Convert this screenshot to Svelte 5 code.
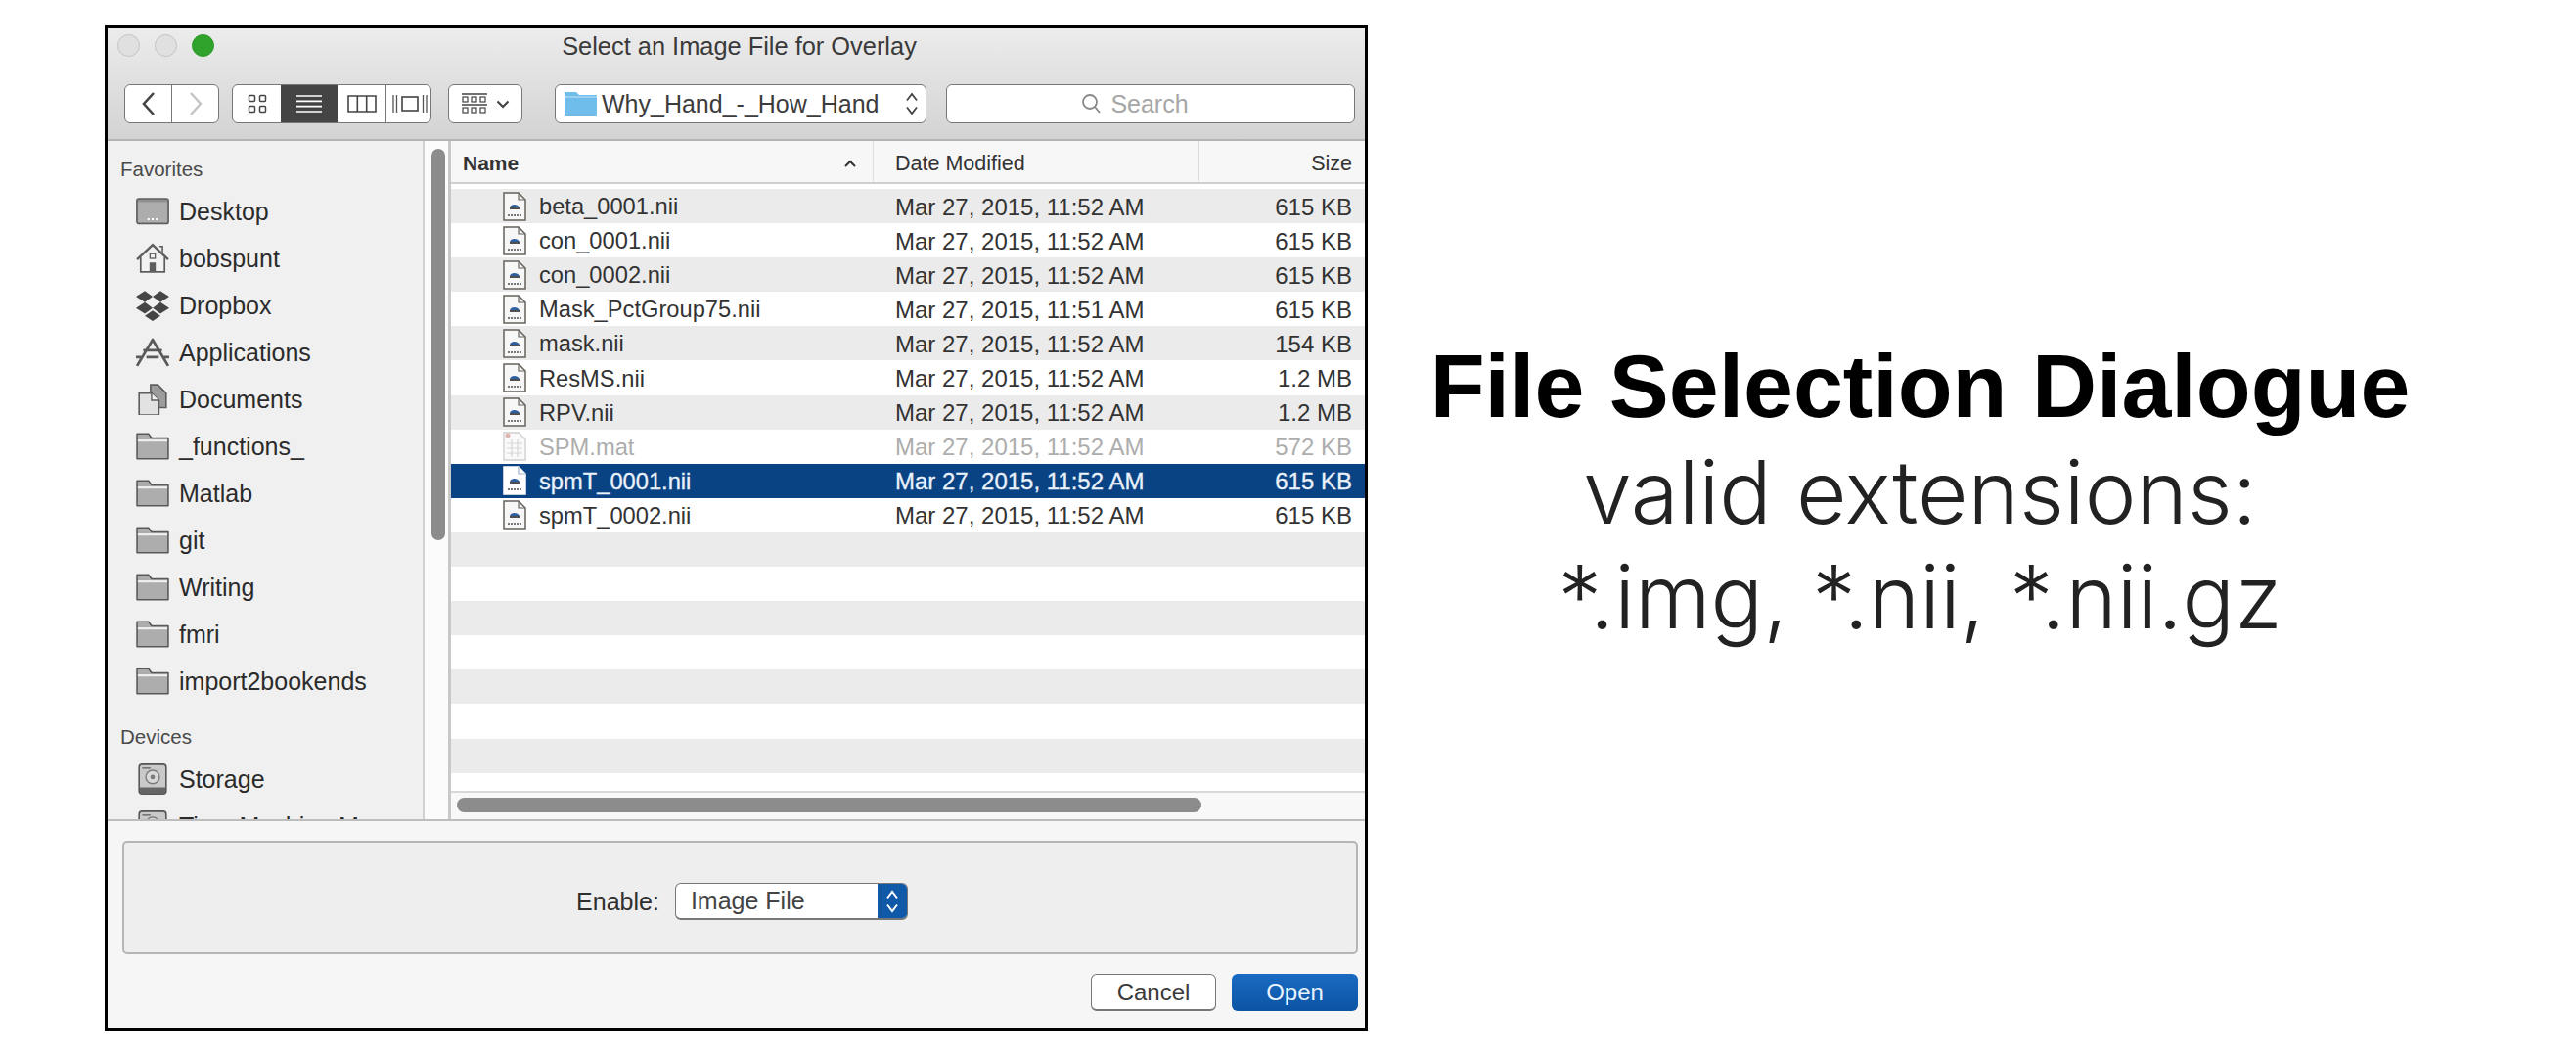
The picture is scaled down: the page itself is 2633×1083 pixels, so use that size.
<script>
  const favorites = [
    ['desktop', 'Desktop'], ['home', 'bobspunt'], ['dropbox', 'Dropbox'], ['apps', 'Applications'],
    ['docs', 'Documents'], ['folder', '_functions_'], ['folder', 'Matlab'], ['folder', 'git'],
    ['folder', 'Writing'], ['folder', 'fmri'], ['folder', 'import2bookends']
  ];
  const files = [
    ['beta_0001.nii', 'Mar 27, 2015, 11:52 AM', '615 KB'],
    ['con_0001.nii', 'Mar 27, 2015, 11:52 AM', '615 KB'],
    ['con_0002.nii', 'Mar 27, 2015, 11:52 AM', '615 KB'],
    ['Mask_PctGroup75.nii', 'Mar 27, 2015, 11:51 AM', '615 KB'],
    ['mask.nii', 'Mar 27, 2015, 11:52 AM', '154 KB'],
    ['ResMS.nii', 'Mar 27, 2015, 11:52 AM', '1.2 MB'],
    ['RPV.nii', 'Mar 27, 2015, 11:52 AM', '1.2 MB'],
    ['SPM.mat', 'Mar 27, 2015, 11:52 AM', '572 KB'],
    ['spmT_0001.nii', 'Mar 27, 2015, 11:52 AM', '615 KB'],
    ['spmT_0002.nii', 'Mar 27, 2015, 11:52 AM', '615 KB']
  ];
  const rows = Array.from({ length: 18 }, (_, i) => files[i] ?? null);
</script>

{#snippet sideIcon(kind)}
  <svg class="side-icon" viewBox="0 0 32 30" aria-hidden="true">
    {#if kind === 'desktop'}
      <rect x="0.8" y="2.8" width="30.4" height="24" rx="2" fill="#8f8f8f" stroke="#5d5d5d" stroke-width="1.4"/>
      <rect x="2" y="6" width="28" height="19.5" fill="#adadad"/>
      <path d="M11 22.5h2M15 22.5h2M19 22.5h2" stroke="#fff" stroke-width="2"/>
    {:else if kind === 'home'}
      <path d="M4.5 14v14h23V14" fill="#f2f2f2" stroke="#5d5d5d" stroke-width="1.6"/>
      <path d="M1 16 16 2l15 14" fill="none" stroke="#5d5d5d" stroke-width="2.2"/>
      <path d="M22.5 3.5h3v6" fill="none" stroke="#5d5d5d" stroke-width="1.5"/>
      <rect x="13" y="19" width="6" height="9" fill="#5d5d5d"/>
      <rect x="13.5" y="10.5" width="5" height="4.5" fill="none" stroke="#5d5d5d" stroke-width="1.2"/>
    {:else if kind === 'dropbox'}
      <path d="M8.5 1 0 6.500 8.500 12 16 6.500zM23.500 1 16 6.500 23.500 12 32 6.500zM8.500 12 0 17.500 8.500 23 16 17.500zM23.500 12 16 17.500 23.500 23 32 17.500zM16 20l-7.500 5L16 30l7.500-5z" fill="#454545"/>
    {:else if kind === 'apps'}
      <path d="M1 28 16.500 2M31 28 15.500 2M0 19.500h5M10 19.500h12M27 19.500h5M7 13h18" fill="none" stroke="#5a5a5a" stroke-width="2.600"/>
    {:else if kind === 'docs'}
      <path d="M14 1h7l8 8v14H14z" fill="#9c9c9c" stroke="#5d5d5d" stroke-width="1.500"/>
      <path d="M3 9h12l7 7v14H3z" fill="#e2e2e2" stroke="#5d5d5d" stroke-width="1.500"/>
      <path d="M15 9v7h7" fill="#f4f4f4" stroke="#5d5d5d" stroke-width="1.300"/>
    {:else if kind === 'folder'}
      <path d="M1 27V3h11l3 4h16v20z" fill="#adadad" stroke="#5a5a5a" stroke-width="1.500" stroke-linejoin="round"/>
      <path d="M1.800 9.500h28.400" stroke="#f0f0f0" stroke-width="2"/>
    {:else if kind === 'disk'}
      <rect x="3" y="0.800" width="26" height="28.400" rx="3" fill="#c9c9c9" stroke="#555" stroke-width="1.500"/>
      <circle cx="16" cy="13" r="6.500" fill="#d9d9d9" stroke="#7c7c7c" stroke-width="1.300"/>
      <circle cx="16" cy="13" r="2.200" fill="#7c7c7c"/>
      <path d="M6 4.500h8" stroke="#666" stroke-width="1.300"/>
      <rect x="3.500" y="23" width="25" height="6" fill="#656565"/>
    {/if}
  </svg>
{/snippet}

{#snippet fileIcon(mat, selected)}
  <svg class="file-icon" viewBox="0 0 26 30" aria-hidden="true">
    {#if mat}
      <path d="M2 1h15l7 7v21H2z" fill="#fafafa" stroke="#d0d0d0" stroke-width="1.400"/>
      <path d="M5 12h16M5 17h16M5 22h16M10 8v18M16 8v18" stroke="#d6d6d6" stroke-width="1.200"/>
      <circle cx="6" cy="4" r="2.500" fill="#e0b5b0"/>
    {:else}
      <path d="M2 1h15l7 7v21H2z" fill={selected ? '#fff' : '#f7f7f7'} stroke={selected ? '#fff' : '#67625c'} stroke-width="1.500"/>
      <path d="M17 1v7h7" fill="none" stroke={selected ? '#9db4d0' : '#67625c'} stroke-width="1.200"/>
      <path d="M8 16c1-4 8-4 10 0z" fill="#2d5fa0"/>
      <path d="M8 17h10" stroke="#3d3d3d" stroke-width="1.800"/>
      <path d="M6 24h14" stroke="#777" stroke-width="2" stroke-dasharray="2 1"/>
    {/if}
  </svg>
{/snippet}

<div class="page">
  <section class="dialog">
    <header class="chrome">
      <div class="titlerow">
        <div class="lights">
          <span class="light"></span><span class="light"></span><span class="light green"></span>
        </div>
        <span class="title">Select an Image File for Overlay</span>
      </div>
      <div class="toolbar">
        <div class="seg nav">
          <span class="cell"><svg viewBox="0 0 16 26" width="16" height="26"><path d="M13 2 3 13l10 11" fill="none" stroke="#444" stroke-width="2.600"/></svg></span>
          <span class="cell"><svg viewBox="0 0 16 26" width="16" height="26"><path d="M3 2l10 11L3 24" fill="none" stroke="#c4c4c4" stroke-width="2.400"/></svg></span>
        </div>
        <div class="seg views">
          <span class="cell c1"><svg viewBox="0 0 20 20" width="20" height="20"><g fill="none" stroke="#444" stroke-width="1.500"><rect x="1.500" y="1.500" width="6" height="6" rx="1"/><rect x="12.500" y="1.500" width="6" height="6" rx="1"/><rect x="1.500" y="12.500" width="6" height="6" rx="1"/><rect x="12.500" y="12.500" width="6" height="6" rx="1"/></g></svg></span>
          <span class="cell c2 active"><svg viewBox="0 0 26 20" width="26" height="20"><path d="M0 2h26M0 7.300h26M0 12.600h26M0 18h26" stroke="#fff" stroke-width="1.700"/></svg></span>
          <span class="cell c1"><svg viewBox="0 0 30 18" width="30" height="18"><path d="M1 1h28v16H1zM10.300 1v16M19.700 1v16" fill="none" stroke="#444" stroke-width="1.600"/></svg></span>
          <span class="cell c1"><svg viewBox="0 0 36 18" width="36" height="18"><path d="M1 0v18M4.500 0v18M31.500 0v18M35 0v18" stroke="#555" stroke-width="1.300"/><rect x="10" y="2" width="16" height="14" fill="none" stroke="#444" stroke-width="1.600"/></svg></span>
        </div>
        <div class="seg arrange">
          <svg viewBox="0 0 26 22" width="26" height="22"><path d="M0 1h26M0 12h26" stroke="#444" stroke-width="1.300"/><g fill="none" stroke="#444" stroke-width="1.200"><rect x="1" y="4" width="5" height="5"/><rect x="10" y="4" width="5" height="5"/><rect x="19" y="4" width="5" height="5"/><rect x="1" y="15" width="5" height="5"/><rect x="10" y="15" width="5" height="5"/><rect x="19" y="15" width="5" height="5"/></g></svg>
          <svg viewBox="0 0 14 9" width="14" height="9"><path d="M1.500 1.500 7 7l5.500-5.500" fill="none" stroke="#444" stroke-width="2.200"/></svg>
        </div>
        <div class="seg path">
          <svg viewBox="0 0 33 25" width="33" height="25"><path d="M0 25V0h12l3 3h18v22z" fill="#6fbdea"/><path d="M0 5h33" stroke="#a9d8f3" stroke-width="1.500"/></svg>
          <span class="pathname">Why_Hand_-_How_Hand</span>
          <svg class="updown" viewBox="0 0 14 28" width="14" height="28"><path d="M2 10.500 7 4l5 6.500M2 17.500 7 24l5-6.500" fill="none" stroke="#444" stroke-width="1.800"/></svg>
        </div>
        <div class="seg search">
          <svg viewBox="0 0 20 22" width="20" height="22"><circle cx="9" cy="9" r="7" fill="none" stroke="#888" stroke-width="1.800"/><path d="m14 14 5 6" stroke="#888" stroke-width="1.800"/></svg>
          <span>Search</span>
        </div>
      </div>
    </header>

    <div class="main">
      <aside class="sidebar">
        <h3>Favorites</h3>
        {#each favorites as item}
          <div class="side-item">{@render sideIcon(item[0])}<span>{item[1]}</span></div>
        {/each}
        <h3 class="devices">Devices</h3>
        <div class="side-item">{@render sideIcon('disk')}<span>Storage</span></div>
        <div class="side-item">{@render sideIcon('disk')}<span>Time Machine M</span></div>
      </aside>
      <div class="vtrack"><div class="vthumb"></div></div>
      <div class="browser">
        <div class="thead">
          <div class="th name"><b>Name</b><svg viewBox="0 0 12 8" width="12" height="8"><path d="M1 7l5-5 5 5" fill="none" stroke="#333" stroke-width="2"/></svg></div>
          <div class="th date">Date Modified</div>
          <div class="th size">Size</div>
        </div>
        <div class="tbody">
          {#each rows as row, i}
            <div class="row" class:stripe={i % 2 === 0} class:selected={i === 8} class:dim={i === 7}>
              {#if row}
                <div class="td name">{@render fileIcon(i === 7, i === 8)}<span>{row[0]}</span></div>
                <div class="td date">{row[1]}</div>
                <div class="td size">{row[2]}</div>
              {/if}
            </div>
          {/each}
        </div>
        <div class="htrack"><div class="hthumb"></div></div>
      </div>
    </div>

    <footer class="footer">
      <div class="accessory">
        <span class="enable">Enable:</span>
        <div class="select">
          <span class="select-text">Image File</span>
          <span class="stepper"><svg viewBox="0 0 14 28" width="14" height="28"><path d="M2 10.500 7 4l5 6.500M2 17.500 7 24l5-6.500" fill="none" stroke="#fff" stroke-width="2"/></svg></span>
        </div>
      </div>
      <div class="actions">
        <span class="btn">Cancel</span>
        <span class="btn primary">Open</span>
      </div>
    </footer>
  </section>

  <section class="caption">
    <strong>File Selection Dialogue</strong>
    <span>valid extensions:</span>
    <span>*.img, *.nii, *.nii.gz</span>
  </section>
</div>

<style>
  :global(body) { margin: 0; background: #fff; }
  .page {
    display: flex; align-items: flex-start; width: 2633px; height: 1083px;
    padding: 26px 0 0 107px; box-sizing: border-box; overflow: hidden;
    font-family: "Liberation Sans", Arial, sans-serif; color: #2b2b2b;
  }
  .dialog {
    width: 1291px; height: 1027px; box-sizing: border-box; border: 3px solid #000;
    display: flex; flex-direction: column; background: #f6f6f6; flex: none;
  }
  .chrome {
    height: 115px; flex: none; box-sizing: border-box;
    background: linear-gradient(#ececec, #d3d3d3); border-bottom: 2px solid #b3b3b3;
  }
  .titlerow { height: 57px; position: relative; display: flex; align-items: center; justify-content: center; padding-bottom: 20px; box-sizing: border-box; }
  .lights { position: absolute; left: 10px; top: 6px; display: flex; gap: 15px; }
  .light { width: 23px; height: 23px; border-radius: 50%; box-sizing: border-box; border: 1.500px solid #c4c4c4; background: #e0e0e0; }
  .light.green { background: #2fa32b; border-color: #2c9a28; }
  .title { font-size: 25.400px; color: #3a3a3a; transform: translateX(3px); }

  .toolbar { display: flex; align-items: stretch; height: 40px; padding-left: 17px; }
  .seg {
    box-sizing: border-box; background: #fff; border: 1.500px solid #777; border-radius: 6px;
    display: flex; align-items: center; overflow: hidden; flex: none;
  }
  .cell { display: flex; align-items: center; justify-content: center; height: 100%; box-sizing: border-box; }
  .nav { width: 97px; }
  .nav .cell { flex: 1; }
  .nav .cell + .cell { border-left: 1.500px solid #777; }
  .views { width: 204px; margin-left: 13px; }
  .views .c1 { width: 49px; flex: none; }
  .views .c2 { width: 58px; flex: none; background: #444; }
  .views .c1:last-child { border-left: 1.500px solid #777; }
  .arrange { width: 76px; margin-left: 17px; justify-content: center; gap: 9px; }
  .path { width: 380px; margin-left: 33px; padding-left: 9px; gap: 6px; position: relative; }
  .pathname { font-size: 25px; color: #3c3c3c; white-space: nowrap; transform: translateX(-1px); }
  .updown { position: absolute; right: 7px; top: 5px; }
  .search { width: 418px; margin-left: 20px; padding-right: 32px; justify-content: center; gap: 10px; color: #a6a6a6; font-size: 25px; }

  .main { flex: 1; min-height: 0; display: flex; border-bottom: 2px solid #bdbdbd; box-sizing: border-box; }
  .sidebar {
    width: 324px; flex: none; box-sizing: border-box; background: #f0f0f0;
    border-right: 2px solid #d0d0d0; overflow: hidden; padding: 17px 0 0 13px;
  }
  .sidebar h3 { margin: 0 0 7px; height: 24px; line-height: 24px; font-size: 20.500px; font-weight: 400; color: #4a4a4a; }
  .sidebar h3.devices { margin-top: 21px; margin-bottom: 7px; }
  .side-item { height: 48px; display: flex; align-items: center; padding-left: 16px; gap: 10px; font-size: 25px; color: #2b2b2b; white-space: nowrap; }
  .side-icon { width: 34px; height: 32px; flex: none; }

  .vtrack { width: 27px; flex: none; background: #fbfbfb; border-right: 3px solid #c8c8c8; box-sizing: border-box; padding: 8px 0 0 7px; }
  .vthumb { width: 14px; height: 400px; border-radius: 7px; background: #8c8c8c; }

  .browser { flex: 1; min-width: 0; display: flex; flex-direction: column; background: #fff; }
  .thead {
    height: 44px; flex: none; box-sizing: border-box; display: grid; grid-template-columns: 432px 333px 1fr;
    background: #f7f7f7; border-bottom: 2px solid #cfcfcf; font-size: 21.500px; color: #333;
  }
  .th { display: flex; align-items: center; padding-top: 4px; box-sizing: border-box; }
  .th.name { padding-left: 12px; padding-right: 17px; justify-content: space-between; border-right: 1px solid #dedede; }
  .th.name b { font-size: 21px; }
  .th.date { padding-left: 22px; border-right: 1px solid #dedede; }
  .th.size { justify-content: flex-end; padding-right: 13px; }

  .tbody { flex: 1; min-height: 0; overflow: hidden; padding-top: 5px; box-sizing: border-box; border-bottom: 2px solid #d8d8d8; }
  .row {
    height: 35.100px; box-sizing: border-box; display: grid; grid-template-columns: 432px 333px 1fr;
    align-items: center; font-size: 24px; color: #333; background: #fff;
  }
  .row.stripe { background: #ebebeb; }
  .row.selected { background: #0a4384; color: #e9f1fa; -webkit-text-stroke: 0.3px #e9f1fa; }
  .row.dim { color: #adadad; }
  .td.name { display: flex; align-items: center; padding-left: 52px; gap: 12px; font-size: 23.700px; }
  .td.name span, .td.date, .td.size { position: relative; top: 1px; }
  .td.date { padding-left: 22px; color: inherit; }
  .td.size { text-align: right; padding-right: 13px; }
  .file-icon { width: 26px; height: 30px; flex: none; }
  .htrack { height: 27px; flex: none; background: #f8f8f8; padding: 5px 0 0 6px; box-sizing: border-box; }
  .hthumb { width: 761px; height: 15px; border-radius: 8px; background: #8c8c8c; }

  .footer { height: 211px; flex: none; padding: 20px 7px 0 15px; box-sizing: border-box; display: flex; flex-direction: column; }
  .accessory {
    height: 116px; flex: none; box-sizing: border-box; background: #eeeeee; border: 2px solid #b5b5b5; border-radius: 5px;
    display: flex; align-items: center; justify-content: center; gap: 16px; padding-left: 4px; padding-top: 8px; font-size: 25px; color: #2f2f2f;
  }
  .select {
    width: 238px; height: 38px; box-sizing: border-box; background: #fff; border: 1.500px solid #777; border-bottom-width: 2px;
    border-radius: 6px; display: flex; align-items: center; overflow: hidden;
  }
  .select-text { flex: 1; padding-left: 15px; color: #444; }
  .stepper { width: 30px; height: 100%; background: #1058a8; display: flex; align-items: center; justify-content: center; }
  .actions { display: flex; justify-content: flex-end; gap: 16px; margin-top: 20px; }
  .btn {
    width: 128px; height: 38px; box-sizing: border-box; border: 1.500px solid #777; border-bottom-width: 2px; border-radius: 6px;
    background: #fff; font-size: 24px; color: #3a3a3a; display: flex; align-items: center; justify-content: center;
  }
  .btn.primary { width: 129px; border: none; background: linear-gradient(#1a6ac2, #0c54a4); color: #eaf3ff; }

  .caption {
    flex: 1; display: flex; flex-direction: column; align-items: center; margin-top: 315px; padding-right: 106px; padding-left: 0;
    font-size: 91.500px; line-height: 107.500px; color: #111; white-space: nowrap;
  }
  .caption strong { font-weight: 700; color: #000; }
  .caption span { font-family: Inter, "Liberation Sans", sans-serif; font-weight: 300; font-size: 89px; color: #222; }
</style>
